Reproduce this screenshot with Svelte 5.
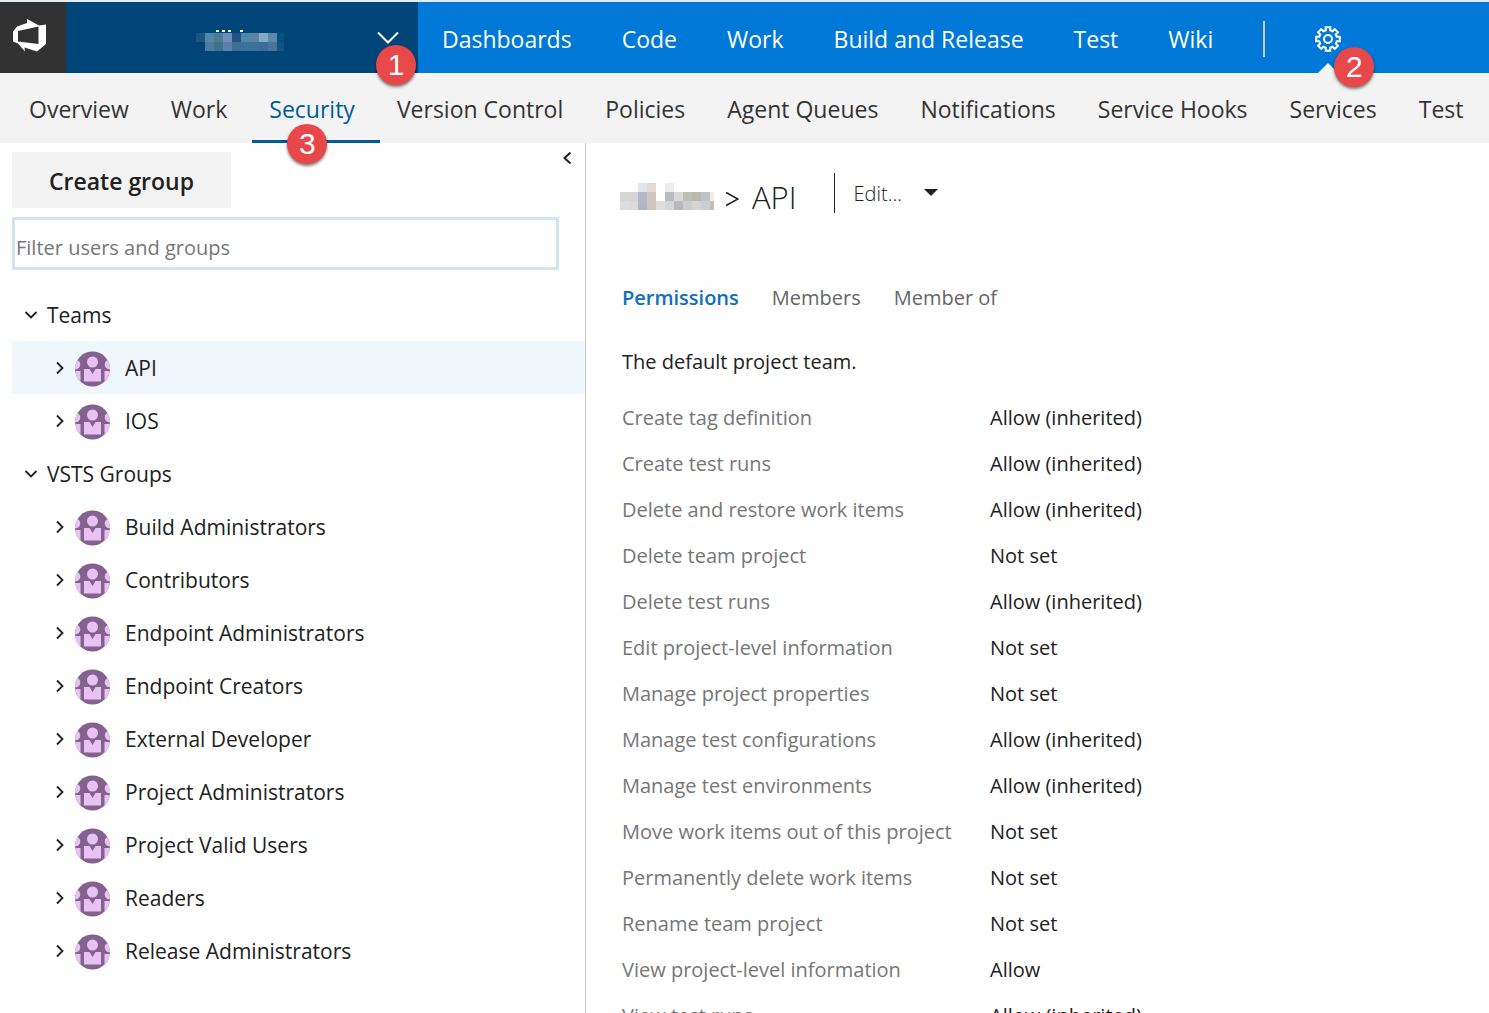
<script>
  const mainNav = ['Dashboards', 'Code', 'Work', 'Build and Release', 'Test', 'Wiki'];
  const subNav = ['Overview', 'Work', 'Security', 'Version Control', 'Policies', 'Agent Queues', 'Notifications', 'Service Hooks', 'Services', 'Test'];
  const groups = [
    { name: 'Teams', items: ['API', 'IOS'] },
    {
      name: 'VSTS Groups',
      items: ['Build Administrators', 'Contributors', 'Endpoint Administrators', 'Endpoint Creators', 'External Developer', 'Project Administrators', 'Project Valid Users', 'Readers', 'Release Administrators']
    }
  ];
  const tabs = ['Permissions', 'Members', 'Member of'];
  const permissions = [
    ['Create tag definition', 'Allow (inherited)'],
    ['Create test runs', 'Allow (inherited)'],
    ['Delete and restore work items', 'Allow (inherited)'],
    ['Delete team project', 'Not set'],
    ['Delete test runs', 'Allow (inherited)'],
    ['Edit project-level information', 'Not set'],
    ['Manage project properties', 'Not set'],
    ['Manage test configurations', 'Allow (inherited)'],
    ['Manage test environments', 'Allow (inherited)'],
    ['Move work items out of this project', 'Not set'],
    ['Permanently delete work items', 'Not set'],
    ['Rename team project', 'Not set'],
    ['View project-level information', 'Allow'],
    ['View test runs', 'Allow (inherited)']
  ];

  // Redacted project names, drawn as rows of 9px mosaic cells.
  const projectMosaic = [
    ['#205480', '#4f86aa', '#4b7c93', '#6c8fba', '#205480', '#4f86aa', '#5c82a4', '#83a8c2', '#5f87ab', '#04507f'],
    [null, '#4c7aa2', '#41718c', '#5a80ab', '#416c95', '#3b719a', '#3b719a', '#3a6d9b', '#4c7497', '#0c5586']
  ];
  const crumbMosaic = [
    [null, null, '#e3e5e8', '#dfdad7', null, '#eeeeee'],
    ['#d6d6d6', '#d6d6d6', '#b2bac8', '#d0c6c0', null, '#b9bbc1', '#d9d9da', '#bfbdb9', '#b9b8b5', '#c1c4c7', '#efebe8'],
    ['#dadee2', '#dbdad6', '#b0b8c6', '#cfc5bf', '#dfdedd', '#d2d5d9', '#b9b9b9', '#cbcdd0', '#d5d4d2', '#cbced2', '#c8bdb6']
  ];

  // Outline of the eight-toothed settings gear.
  function gearPath(teeth, outer, inner) {
    const step = (Math.PI * 2) / teeth;
    const points = [];
    for (let i = 0; i < teeth; i++) {
      const a = i * step - Math.PI / 2;
      for (const [r, d] of [[inner, -0.25], [outer, -0.19], [outer, 0.19], [inner, 0.25]]) {
        points.push(`${(13 + r * Math.cos(a + d)).toFixed(2)} ${(13 + r * Math.sin(a + d)).toFixed(2)}`);
      }
    }
    return `M${points.join('L')}Z`;
  }
  const gear = gearPath(8, 12, 9);

  let selected = $state('API');
  let filter = $state('');
</script>

{#snippet mosaic(rows)}
  {#each rows as row, y}
    {#each row as color, x}
      {#if color}<rect x={x * 9} y={y * 9} width="9" height="9" fill={color} />{/if}
    {/each}
  {/each}
{/snippet}

{#snippet chevron(kind)}
  <svg class:down={kind === 'down'} width="14" height="14" viewBox="0 0 14 14" aria-hidden="true">
    <path d="M4 1.5L9.5 7L4 12.5" fill="none" stroke="currentColor" stroke-width="1.800" />
  </svg>
{/snippet}

<div class="page">
  <header class="topbar">
    <a class="logo" href="#home" aria-label="Home">
      <svg width="34" height="34" viewBox="0 0 34 34" aria-hidden="true">
        <path fill="#fff" fill-rule="evenodd" d="M1 12.500L5 7.500L15 4V0L27 6.500L34 5.500V25L25 32.500L12.500 28.500L13 32.500L6 24.500L1 22.500ZM6 12V22.500L26.500 25V7.500Z" />
      </svg>
    </a>
    <button class="project" aria-label="Select project">
      <svg width="88" height="26" viewBox="0 -8 88 26" aria-hidden="true">
        <path d="M20 -2h3M26 -2h3M32 -2h3M44 -2h3" stroke="#fff" stroke-width="2" />
        {@render mosaic(projectMosaic)}
      </svg>
      <svg width="22" height="14" viewBox="0 0 22 14" aria-hidden="true">
        <path d="M1 1.500L11 11.500L21 1.500" fill="none" stroke="#fff" stroke-width="2" />
      </svg>
      <span class="badge one">1</span>
    </button>
    <nav class="main-nav" aria-label="Main">
      {#each mainNav as item}
        <a href="#{item}">{item}</a>
      {/each}
    </nav>
    <span class="divider"></span>
    <button class="settings" aria-label="Settings">
      <svg width="26" height="26" viewBox="0 0 26 26" fill="none" stroke="#fff" stroke-width="2" aria-hidden="true">
        <path d={gear} />
        <circle cx="13" cy="13" r="4" />
      </svg>
      <span class="pointer"></span>
      <span class="badge two">2</span>
    </button>
  </header>

  <nav class="sub-nav" aria-label="Project settings">
    {#each subNav as item}
      <a href="#{item}" class:current={item === 'Security'}>
        {item}
        {#if item === 'Security'}<span class="badge three">3</span>{/if}
      </a>
    {/each}
  </nav>

  <main>
    <aside>
      <div class="tools">
        <button class="create">Create group</button>
        <button aria-label="Collapse pane">
          <svg width="10" height="14" viewBox="0 0 10 14" aria-hidden="true">
            <path d="M8.500 0.500L2.500 6L8.500 11.500" fill="none" stroke="currentColor" stroke-width="2" />
          </svg>
        </button>
      </div>
      <input class="filter" type="text" placeholder="Filter users and groups" aria-label="Filter users and groups" bind:value={filter} />
      <div class="tree">
        {#each groups as group}
          <button class="group">{@render chevron('down')}{group.name}</button>
          {#each group.items as item}
            <button class="item" class:selected={item === selected} onclick={() => (selected = item)}>
              {@render chevron('right')}
              <svg class="avatar" viewBox="0 0 35 36" aria-hidden="true">
                <clipPath id="round"><circle cx="17.500" cy="18" r="17.500" /></clipPath>
                <g clip-path="url(#round)">
                  <rect width="35" height="36" fill="#85618f" />
                  <g fill="#e8c2f2">
                    <circle cx="17.500" cy="11" r="5.500" />
                    <path d="M9 18H14.500L17.500 23L20.500 18H26V30.500H9Z" />
                    <circle cx="0.500" cy="13.500" r="4.800" />
                    <circle cx="34.500" cy="13.500" r="4.800" />
                    <path d="M0 20H5.500V31H0ZM29.500 20H35V31H29.500Z" />
                  </g>
                </g>
              </svg>
              <span>{item}</span>
            </button>
          {/each}
        {/each}
      </div>
    </aside>

    <section class="details">
      <div class="heading">
        <svg width="94" height="27" viewBox="0 0 94 27" aria-hidden="true">{@render mosaic(crumbMosaic)}</svg>
        <svg class="crumb" width="14" height="16" viewBox="0 0 14 16" aria-hidden="true">
          <path d="M1 1.500L13 8L1 14.500" fill="none" stroke="currentColor" stroke-width="1.500" />
        </svg>
        <h1>API</h1>
        <button class="edit">
          Edit...
          <svg width="14" height="8" viewBox="0 0 14 8" aria-hidden="true"><path d="M0 0H14L7 7Z" fill="currentColor" /></svg>
        </button>
      </div>
      <div class="tabs" role="tablist">
        {#each tabs as tab, i}
          <button role="tab" aria-selected={i === 0} class:active={i === 0}>{tab}</button>
        {/each}
      </div>
      <p>The default project team.</p>
      <table>
        <tbody>
          {#each permissions as [name, value]}
            <tr><th scope="row">{name}</th><td>{value}</td></tr>
          {/each}
        </tbody>
      </table>
    </section>
  </main>
</div>

<style>
  :global(body) {
    margin: 0;
    background: #fff;
  }
  .page {
    box-sizing: border-box;
    height: 100vh;
    overflow: hidden;
    display: flex;
    flex-direction: column;
    border-top: 2px solid #e3ebf1;
    font-family: 'Open Sans', 'Noto Sans', sans-serif;
    font-size: 20px;
    color: #212121;
  }
  button {
    font: inherit;
    color: inherit;
    border: 0;
    padding: 0;
    background: none;
    cursor: pointer;
  }
  a {
    color: inherit;
    text-decoration: none;
  }
  svg {
    display: block;
    flex: none;
  }
  .topbar {
    flex: none;
    display: flex;
    align-items: center;
    height: 71px;
    background: #0078d7;
    color: #fff;
    font-size: 23px;
  }
  .logo {
    box-sizing: border-box;
    width: 66px;
    height: 100%;
    padding: 17px 0 0 12px;
    background: #323232;
  }
  .project {
    position: relative;
    box-sizing: border-box;
    width: 352px;
    height: 100%;
    padding: 1px 19px 0 130px;
    display: flex;
    align-items: center;
    justify-content: space-between;
    background: #004578;
  }
  .main-nav {
    display: flex;
    gap: 50px;
    padding: 2px 50px 0 24px;
    white-space: nowrap;
    line-height: 36px;
  }
  .divider {
    width: 2px;
    height: 36px;
    margin-top: 2px;
    background: #c8c8c8;
  }
  .settings {
    position: relative;
    box-sizing: border-box;
    display: flex;
    align-items: center;
    height: 100%;
    margin-left: 50px;
    padding-top: 3px;
  }
  .pointer {
    position: absolute;
    bottom: 0;
    left: 3px;
    border: 10px solid transparent;
    border-top: 0;
    border-bottom-color: #f3f3f3;
  }
  .badge {
    position: absolute;
    z-index: 1;
    width: 40px;
    height: 40px;
    border-radius: 50%;
    background: #e84849;
    color: #fff;
    box-shadow: 0 2px 3px rgba(0, 0, 0, 0.5);
    font-family: 'Liberation Sans', Arial, sans-serif;
    font-size: 30px;
    line-height: 40px;
    text-align: center;
  }
  .badge.one {
    right: 2px;
    top: 43px;
  }
  .badge.two {
    left: 19px;
    top: 45px;
  }
  .badge.three {
    left: 35px;
    top: 51px;
  }
  .sub-nav {
    flex: none;
    display: flex;
    height: 70px;
    padding-left: 12px;
    background: #f3f3f3;
    color: #333;
    font-size: 23px;
    line-height: 72px;
    white-space: nowrap;
  }
  .sub-nav a {
    position: relative;
    box-sizing: border-box;
    height: 70px;
    padding: 0 25px 0 17px;
  }
  .sub-nav a.current {
    color: #005a9e;
    border-bottom: 3px solid #005a9e;
  }
  main {
    flex: 1;
    display: flex;
    min-height: 0;
  }
  aside {
    flex: none;
    box-sizing: border-box;
    width: 586px;
    padding: 9px 0 0 12px;
    border-right: 1px solid #c8c8c8;
  }
  .tools {
    display: flex;
    justify-content: space-between;
    align-items: flex-start;
    padding-right: 13px;
  }
  .create {
    width: 219px;
    height: 56px;
    padding-top: 2px;
    background: #f3f3f3;
    font-size: 23px;
    font-weight: 600;
  }
  .filter {
    box-sizing: border-box;
    width: calc(100% - 26px);
    height: 53px;
    margin-top: 9px;
    padding: 7px 1px 0;
    border: 3px solid #d0e4f5;
    outline: 0;
    font: inherit;
  }
  .filter::placeholder {
    color: #767676;
    opacity: 1;
  }
  .tree {
    margin-top: 18px;
    font-size: 21px;
  }
  .group,
  .item {
    display: flex;
    align-items: center;
    width: 100%;
    height: 53px;
  }
  .group {
    gap: 9px;
    padding-left: 12px;
  }
  .item {
    padding-left: 41px;
  }
  .item.selected {
    background: #eff6fc;
  }
  .down {
    transform: rotate(90deg);
  }
  .avatar {
    width: 35px;
    height: 36px;
    margin: 2px 15px 0 8px;
  }
  .details {
    flex: 1;
    padding: 30px 0 0 34px;
  }
  .heading {
    display: flex;
    align-items: center;
    height: 40px;
  }
  .heading > svg:first-child {
    margin-top: 6px;
  }
  .crumb {
    margin: 12px 13px 0 11px;
  }
  h1 {
    margin: 8px 37px 0 0;
    font-size: 31px;
    line-height: 40px;
    font-weight: 300;
  }
  .edit {
    display: flex;
    align-items: center;
    gap: 22px;
    height: 40px;
    padding-left: 19px;
    border-left: 1px solid #212121;
    font-weight: 300;
  }
  .tabs {
    display: flex;
    gap: 33px;
    margin: 69px 0 0 2px;
    line-height: 32px;
    color: #666;
  }
  .tabs .active {
    color: #106ebe;
    font-weight: 600;
  }
  p {
    margin: 32px 0 0 2px;
    line-height: 32px;
  }
  table {
    margin: 17px 0 0 2px;
    border-collapse: collapse;
    line-height: 46px;
    white-space: nowrap;
  }
  th,
  td {
    padding: 0;
    text-align: left;
    font-weight: 400;
  }
  th {
    width: 368px;
    color: #767676;
  }
</style>
